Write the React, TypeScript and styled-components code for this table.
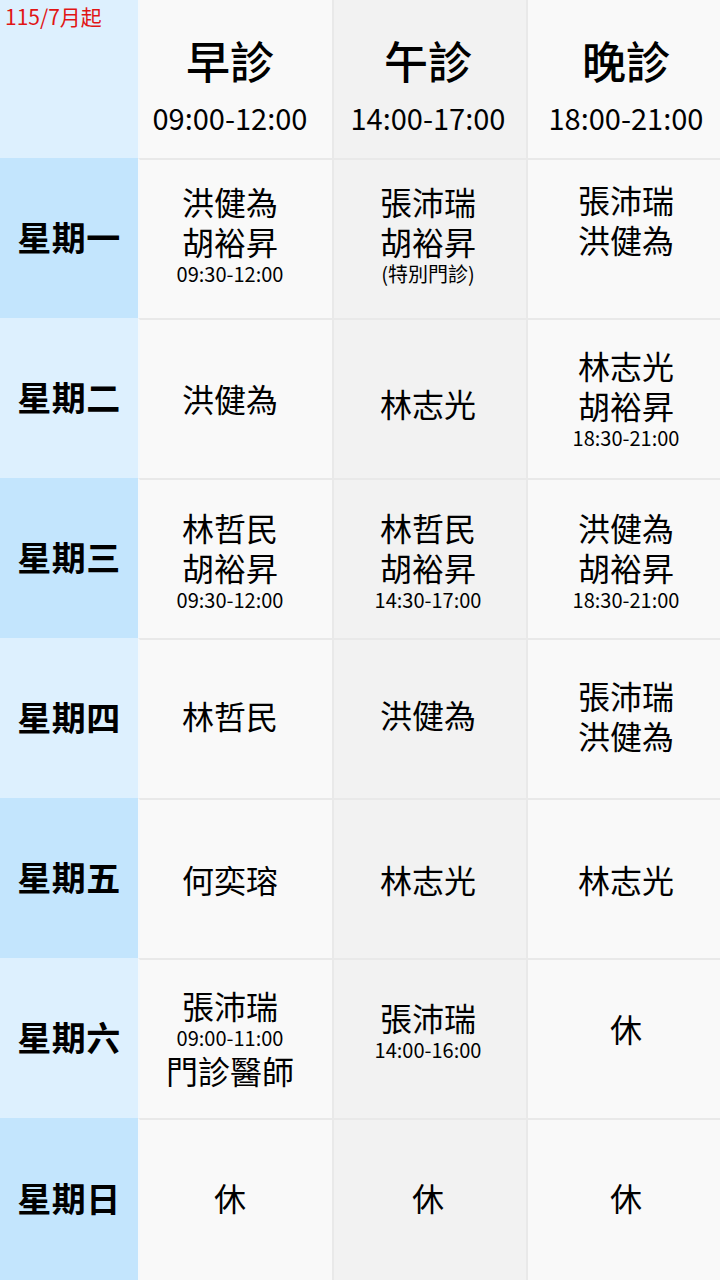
import React from "react";
import styled, { createGlobalStyle } from "styled-components";

const GlobalStyle = createGlobalStyle`
  html, body {
    margin: 0;
    padding: 0;
    background: #f9f9f9;
  }
  body {
    font-family: "Noto Sans CJK TC", "Noto Sans", sans-serif;
    color: #111;
  }
`;

const Table = styled.div`
  width: 720px;
  height: 1280px;
  display: flex;
  flex-direction: column;
  overflow: hidden;
`;

const Row = styled.div<{ $h: number }>`
  display: grid;
  grid-template-columns: 138px 1fr 1fr 1fr;
  height: ${(p) => p.$h}px;
  flex: none;
`;

const DayCell = styled.div<{ $deep: boolean }>`
  background: ${(p) => (p.$deep ? "#c3e5fd" : "#ddf0fe")};
  display: flex;
  align-items: center;
  justify-content: center;
  font-size: 34px;
  font-weight: 700;
  letter-spacing: 0.5px;
  color: #000;
  padding-bottom: 4px;
`;

const CornerCell = styled.div`
  background: #ddf0fe;
  position: relative;
`;

const StartNote = styled.span`
  position: absolute;
  left: 5px;
  top: 2px;
  font-size: 21px;
  color: #e11515;
  line-height: 28px;
`;

const colPad = ["padding-right: 12px;", "padding-right: 4px;", "padding-left: 4px;"];

const Slot = styled.div<{ $col: number; $top: boolean; $shift: number }>`
  background: ${(p) => (p.$col === 1 ? "#f2f2f2" : "#f9f9f9")};
  border-left: 2px solid ${(p) => (p.$col === 0 ? "#f4f8fb" : "#e9e9e9")};
  border-top: ${(p) => (p.$top ? "2px solid #e9e9e9" : "none")};
  display: flex;
  flex-direction: column;
  align-items: center;
  justify-content: center;
  ${(p) => colPad[p.$col]}
  padding-top: ${(p) => (p.$shift > 0 ? p.$shift : 0)}px;
  padding-bottom: ${(p) => (p.$shift < 0 ? -p.$shift : 0)}px;
  color: #000;
`;

const Period = styled.div`
  font-size: 44px;
  line-height: 52px;
  font-weight: 500;
  margin-top: 11px;
`;

const PeriodTime = styled.div`
  font-size: 29px;
  line-height: 36px;
  margin-top: 13px;
`;

const Name = styled.div`
  font-size: 32px;
  line-height: 40px;
  font-weight: 400;
`;

const Small = styled.div`
  font-size: 20px;
  line-height: 24px;
  margin-top: 1px;
`;

type Line = { t: string; s?: boolean };
type SlotData = { lines: Line[]; shift?: number };

const n = (t: string): Line => ({ t });
const s = (t: string): Line => ({ t, s: true });

const periods = [
  { name: "早診", time: "09:00-12:00" },
  { name: "午診", time: "14:00-17:00" },
  { name: "晚診", time: "18:00-21:00" },
];

const days: { day: string; slots: SlotData[] }[] = [
  {
    day: "星期一",
    slots: [
      { lines: [n("洪健為"), n("胡裕昇"), s("09:30-12:00")], shift: -12 },
      { lines: [n("張沛瑞"), n("胡裕昇"), s("(特別門診)")], shift: -12 },
      { lines: [n("張沛瑞"), n("洪健為")], shift: -40 },
    ],
  },
  {
    day: "星期二",
    slots: [
      { lines: [n("洪健為")], shift: -2 },
      { lines: [n("林志光")], shift: 8 },
      { lines: [n("林志光"), n("胡裕昇"), s("18:30-21:00")], shift: -4 },
    ],
  },
  {
    day: "星期三",
    slots: [
      { lines: [n("林哲民"), n("胡裕昇"), s("09:30-12:00")], shift: 0 },
      { lines: [n("林哲民"), n("胡裕昇"), s("14:30-17:00")], shift: 0 },
      { lines: [n("洪健為"), n("胡裕昇"), s("18:30-21:00")], shift: 0 },
    ],
  },
  {
    day: "星期四",
    slots: [
      { lines: [n("林哲民")], shift: -8 },
      { lines: [n("洪健為")], shift: -10 },
      { lines: [n("張沛瑞"), n("洪健為")], shift: -8 },
    ],
  },
  {
    day: "星期五",
    slots: [
      { lines: [n("何奕瑢")], shift: 0 },
      { lines: [n("林志光")], shift: 0 },
      { lines: [n("林志光")], shift: 0 },
    ],
  },
  {
    day: "星期六",
    slots: [
      { lines: [n("張沛瑞"), s("09:00-11:00"), n("門診醫師")], shift: -3 },
      { lines: [n("張沛瑞"), s("14:00-16:00")], shift: -20 },
      { lines: [n("休")], shift: -22 },
    ],
  },
  {
    day: "星期日",
    slots: [
      { lines: [n("休")], shift: -6 },
      { lines: [n("休")], shift: -6 },
      { lines: [n("休")], shift: -6 },
    ],
  },
];

export default function App() {
  return (
    <>
      <GlobalStyle />
      <Table>
        <Row $h={158}>
          <CornerCell>
            <StartNote>115/7月起</StartNote>
          </CornerCell>
          {periods.map((p, i) => (
            <Slot key={p.name} $col={i} $top={false} $shift={0}>
              <Period>{p.name}</Period>
              <PeriodTime>{p.time}</PeriodTime>
            </Slot>
          ))}
        </Row>
        {days.map((d, r) => (
          <Row key={d.day} $h={r === days.length - 1 ? 162 : 160}>
            <DayCell $deep={r % 2 === 0}>{d.day}</DayCell>
            {d.slots.map((sl, i) => (
              <Slot key={i} $col={i} $top={true} $shift={sl.shift ?? 0}>
                {sl.lines.map((l, k) =>
                  l.s ? <Small key={k}>{l.t}</Small> : <Name key={k}>{l.t}</Name>
                )}
              </Slot>
            ))}
          </Row>
        ))}
      </Table>
    </>
  );
}
